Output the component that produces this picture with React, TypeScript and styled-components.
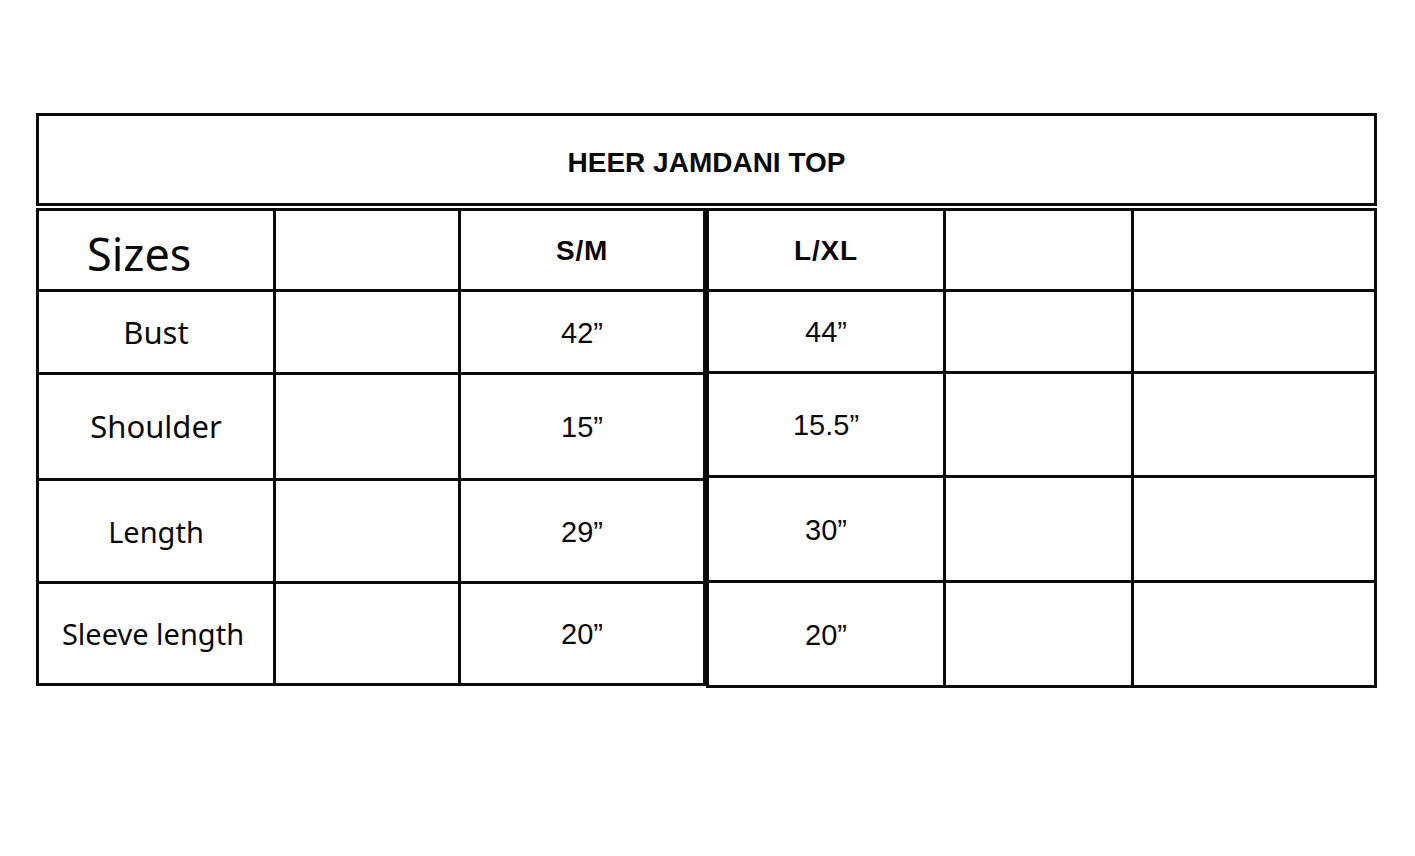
import React from "react";
import styled, { createGlobalStyle } from "styled-components";

const GlobalStyle = createGlobalStyle`
  html, body {
    margin: 0;
    padding: 0;
    background: #ffffff;
  }
  body {
    font-family: "Noto Sans", "Open Sans", sans-serif;
    color: #0a0a0a;
  }
`;

const Page = styled.div`
  width: 1415px;
  height: 856px;
  box-sizing: border-box;
  padding: 113px 0 0 36px;
  display: flex;
  flex-direction: column;
  gap: 2px;
`;

const TitleBox = styled.div`
  width: 1341px;
  height: 93px;
  box-sizing: border-box;
  border: 3px solid #0a0a0a;
  display: flex;
  align-items: center;
  justify-content: center;
  padding-top: 6px;
  font-family: "Liberation Sans", Arial, sans-serif;
  font-size: 28px;
  font-weight: 700;
`;

const Tables = styled.div`
  display: flex;
  align-items: flex-start;
`;

const Grid = styled.div<{ $cols: string; $rows: string }>`
  display: grid;
  grid-template-columns: ${(p) => p.$cols};
  grid-template-rows: ${(p) => p.$rows};
  gap: 3px;
  padding: 3px;
  background: #0a0a0a;
`;

const Cell = styled.div`
  background: #ffffff;
  display: flex;
  align-items: center;
  justify-content: center;
  line-height: 1;
`;

const HeadCell = styled(Cell)`
  font-family: "Liberation Sans", Arial, sans-serif;
  font-size: 28px;
  font-weight: 700;
  letter-spacing: 0.8px;
  padding-top: 2px;
`;

const LabelCell = styled(Cell)<{ $size: number; $shift?: number }>`
  font-size: ${(p) => p.$size}px;
  padding-right: ${(p) => p.$shift ?? 0}px;
`;

const ValueCell = styled(Cell)`
  font-family: "Liberation Sans", Arial, sans-serif;
  font-size: 29px;
  padding-top: 2px;
`;

const SizesCell = styled(Cell)`
  justify-content: flex-start;
  padding-left: 48px;
  padding-top: 6px;
  font-size: 45px;
`;

const leftRows = [
  { label: "Bust", size: 31, value: "42”" },
  { label: "Shoulder", size: 31, value: "15”" },
  { label: "Length", size: 29, value: "29”" },
  { label: "Sleeve length", size: 29, value: "20”", shift: 6 },
];

const rightValues = ["44”", "15.5”", "30”", "20”"];

export default function App() {
  return (
    <>
      <GlobalStyle />
      <Page>
        <TitleBox>HEER JAMDANI TOP</TitleBox>
        <Tables>
          <Grid $cols="234px 182px 242px" $rows="78px 80px 103px 100px 99px">
            <SizesCell>Sizes</SizesCell>
            <Cell />
            <HeadCell>S/M</HeadCell>
            {leftRows.map((r) => (
              <React.Fragment key={r.label}>
                <LabelCell $size={r.size} $shift={r.shift}>
                  {r.label}
                </LabelCell>
                <Cell />
                <ValueCell>{r.value}</ValueCell>
              </React.Fragment>
            ))}
          </Grid>
          <Grid $cols="234px 185px 240px" $rows="78px 79px 101px 102px 102px">
            <HeadCell>L/XL</HeadCell>
            <Cell />
            <Cell />
            {rightValues.map((v, i) => (
              <React.Fragment key={i}>
                <ValueCell>{v}</ValueCell>
                <Cell />
                <Cell />
              </React.Fragment>
            ))}
          </Grid>
        </Tables>
      </Page>
    </>
  );
}
